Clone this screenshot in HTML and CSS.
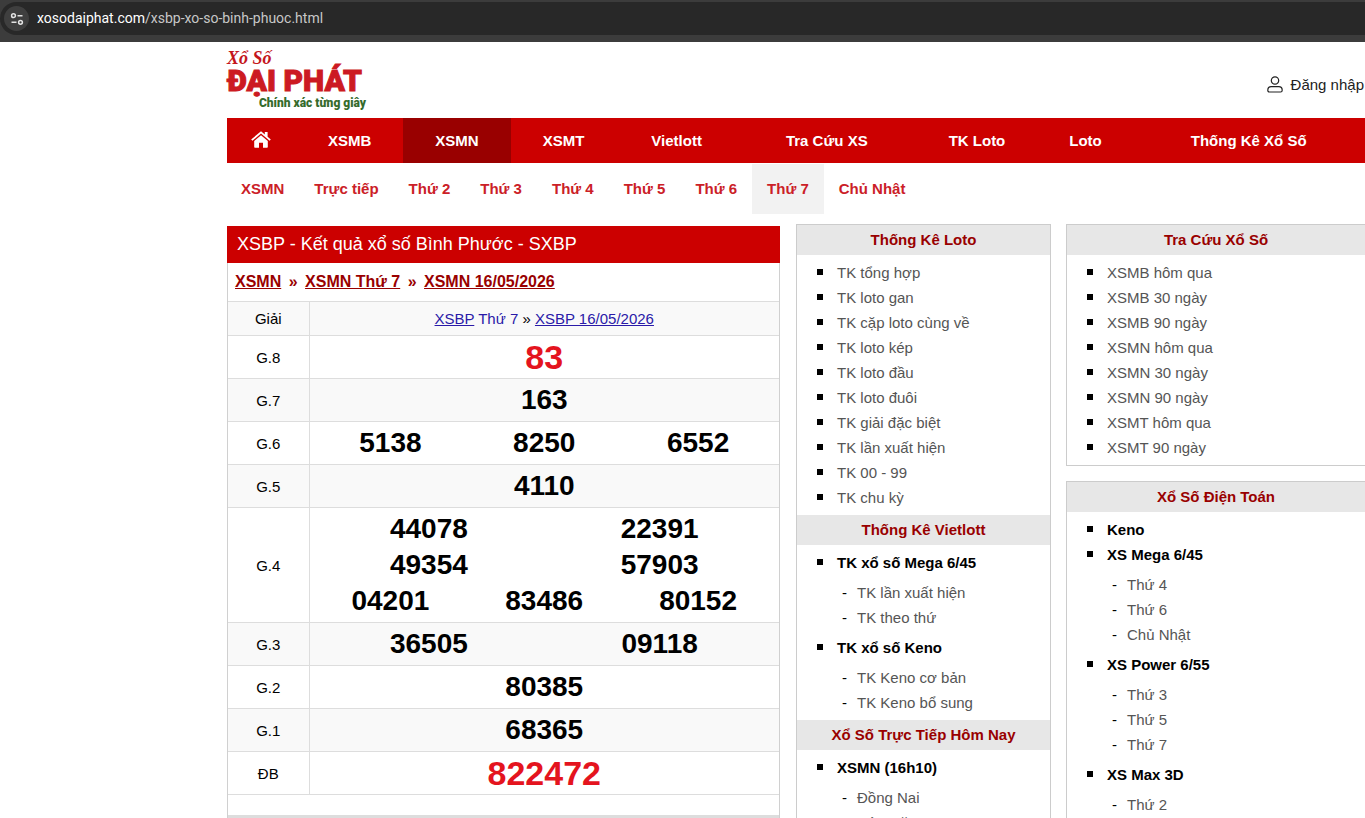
FILE: index.html
```html
<!DOCTYPE html>
<html lang="vi">
<head>
  <meta charset="UTF-8">
  <meta name="viewport" content="width=device-width, initial-scale=1.0">
  <title>XSBP - Kết quả xổ số Bình Phước - SXBP</title>
  <link rel="stylesheet" href="styles.css">
</head>
<body>
  <div class="browser-bar">
    <div class="address">
      <span class="site-info">
        <svg width="14" height="14" viewBox="0 0 14 14" fill="none" stroke="#e3e3e3" stroke-width="1.5">
          <circle cx="3.5" cy="3.7" r="1.9"/>
          <path d="M7.5 3.7h5M1.5 10.3h5"/>
          <circle cx="10.5" cy="10.3" r="1.9"/>
        </svg>
      </span>
      <span class="url"><span class="url-host">xosodaiphat.com</span>/xsbp-xo-so-binh-phuoc.html</span>
    </div>
  </div>

  <div class="container">
    <header class="header">
      <a class="logo" href="#">
        <span class="logo-top">Xổ Số</span>
        <span class="logo-name">ĐẠI PHÁT</span>
        <span class="logo-slogan">Chính xác từng giây</span>
      </a>
      <a class="login" href="#">
        <svg width="16" height="17" viewBox="0 0 16 17" fill="none" stroke="#222" stroke-width="1.2">
          <circle cx="8" cy="4.5" r="3.7"/>
          <path d="M.8 14.2c0-2.3 1.5-3.6 3.4-3.6h7.6c1.9 0 3.4 1.3 3.4 3.6 0 1.1-.6 1.8-1.6 1.8H2.4c-1 0-1.6-.7-1.6-1.8z"/>
        </svg>
        Đăng nhập
      </a>
    </header>

    <nav class="menu">
      <a class="menu-home" href="#" aria-label="Home">
        <svg width="20" height="17" viewBox="0 0 20 17" fill="#fff">
          <path d="M10 4.3 3.2 10v6c0 .5.3.8.8.8h4v-5h4v5h4c.5 0 .8-.3.8-.8v-6z"/>
          <path d="m10 .2 3.8 3.2V1h2.8v4.7l3.2 2.7-1.2 1.4L10 2.6 1.4 9.8.2 8.4z"/>
        </svg>
      </a>
      <a href="#">XSMB</a>
      <a class="active" href="#">XSMN</a>
      <a href="#">XSMT</a>
      <a class="vietlott" href="#">Vietlott</a>
      <a class="search" href="#">Tra Cứu XS</a>
      <a href="#">TK Loto</a>
      <a href="#">Loto</a>
      <a class="stats" href="#">Thống Kê Xổ Số</a>
    </nav>

    <nav class="submenu">
      <a href="#">XSMN</a>
      <a href="#">Trực tiếp</a>
      <a href="#">Thứ 2</a>
      <a href="#">Thứ 3</a>
      <a href="#">Thứ 4</a>
      <a href="#">Thứ 5</a>
      <a href="#">Thứ 6</a>
      <a class="active" href="#">Thứ 7</a>
      <a href="#">Chủ Nhật</a>
    </nav>

    <div class="content">
      <main class="result">
        <h1>XSBP - Kết quả xổ số Bình Phước - SXBP</h1>
        <div class="breadcrumb">
          <a href="#">XSMN</a> <span>»</span> <a href="#">XSMN Thứ 7</a> <span>»</span> <a href="#">XSMN 16/05/2026</a>
        </div>
        <table class="prizes">
          <tbody>
            <tr>
              <th>Giải</th>
              <td><a href="#">XSBP</a> <a class="day" href="#">Thứ 7</a> » <a href="#">XSBP 16/05/2026</a></td>
            </tr>
            <tr>
              <th>G.8</th>
              <td><div class="row special"><span>83</span></div></td>
            </tr>
            <tr>
              <th>G.7</th>
              <td><div class="row"><span>163</span></div></td>
            </tr>
            <tr>
              <th>G.6</th>
              <td><div class="row"><span>5138</span><span>8250</span><span>6552</span></div></td>
            </tr>
            <tr>
              <th>G.5</th>
              <td><div class="row"><span>4110</span></div></td>
            </tr>
            <tr>
              <th>G.4</th>
              <td>
                <div class="row"><span>44078</span><span>22391</span></div>
                <div class="row"><span>49354</span><span>57903</span></div>
                <div class="row"><span>04201</span><span>83486</span><span>80152</span></div>
              </td>
            </tr>
            <tr>
              <th>G.3</th>
              <td><div class="row"><span>36505</span><span>09118</span></div></td>
            </tr>
            <tr>
              <th>G.2</th>
              <td><div class="row"><span>80385</span></div></td>
            </tr>
            <tr>
              <th>G.1</th>
              <td><div class="row"><span>68365</span></div></td>
            </tr>
            <tr>
              <th>ĐB</th>
              <td><div class="row special"><span>822472</span></div></td>
            </tr>
          </tbody>
        </table>
        <div class="result-footer"></div>
      </main>

      <aside class="col-middle">
        <section class="box">
          <h2>Thống Kê Loto</h2>
          <ul>
            <li><a href="#">TK tổng hợp</a></li>
            <li><a href="#">TK loto gan</a></li>
            <li><a href="#">TK cặp loto cùng về</a></li>
            <li><a href="#">TK loto kép</a></li>
            <li><a href="#">TK loto đầu</a></li>
            <li><a href="#">TK loto đuôi</a></li>
            <li><a href="#">TK giải đặc biệt</a></li>
            <li><a href="#">TK lần xuất hiện</a></li>
            <li><a href="#">TK 00 - 99</a></li>
            <li><a href="#">TK chu kỳ</a></li>
          </ul>
          <h2>Thống Kê Vietlott</h2>
          <ul>
            <li><a class="group" href="#">TK xổ số Mega 6/45</a>
              <ul>
                <li><a href="#">TK lần xuất hiện</a></li>
                <li><a href="#">TK theo thứ</a></li>
              </ul>
            </li>
            <li><a class="group" href="#">TK xổ số Keno</a>
              <ul>
                <li><a href="#">TK Keno cơ bản</a></li>
                <li><a href="#">TK Keno bổ sung</a></li>
              </ul>
            </li>
          </ul>
          <h2>Xổ Số Trực Tiếp Hôm Nay</h2>
          <ul>
            <li><a class="group" href="#">XSMN (16h10)</a>
              <ul>
                <li><a href="#">Đồng Nai</a></li>
                <li><a href="#">Sóc Trăng</a></li>
              </ul>
            </li>
          </ul>
        </section>
      </aside>

      <aside class="col-right">
        <section class="box">
          <h2>Tra Cứu Xổ Số</h2>
          <ul>
            <li><a href="#">XSMB hôm qua</a></li>
            <li><a href="#">XSMB 30 ngày</a></li>
            <li><a href="#">XSMB 90 ngày</a></li>
            <li><a href="#">XSMN hôm qua</a></li>
            <li><a href="#">XSMN 30 ngày</a></li>
            <li><a href="#">XSMN 90 ngày</a></li>
            <li><a href="#">XSMT hôm qua</a></li>
            <li><a href="#">XSMT 90 ngày</a></li>
          </ul>
        </section>
        <section class="box">
          <h2>Xổ Số Điện Toán</h2>
          <ul>
            <li><a class="group" href="#">Keno</a></li>
            <li><a class="group" href="#">XS Mega 6/45</a>
              <ul>
                <li><a href="#">Thứ 4</a></li>
                <li><a href="#">Thứ 6</a></li>
                <li><a href="#">Chủ Nhật</a></li>
              </ul>
            </li>
            <li><a class="group" href="#">XS Power 6/55</a>
              <ul>
                <li><a href="#">Thứ 3</a></li>
                <li><a href="#">Thứ 5</a></li>
                <li><a href="#">Thứ 7</a></li>
              </ul>
            </li>
            <li><a class="group" href="#">XS Max 3D</a>
              <ul>
                <li><a href="#">Thứ 2</a></li>
              </ul>
            </li>
          </ul>
        </section>
      </aside>
    </div>
  </div>
</body>
</html>
```

FILE: styles.css
```css
* {
  box-sizing: border-box;
}

html {
  overflow: hidden;
}

body {
  margin: 0;
  font-family: "Liberation Sans", Arial, sans-serif;
  font-size: 15px;
  line-height: 25px;
  color: #000;
  background: #fff;
}

a {
  color: inherit;
  text-decoration: none;
}

/* browser bar */
.browser-bar {
  height: 42px;
  padding: 2px 0 7px;
  background: #3c3c3c;
}

.address {
  display: flex;
  align-items: center;
  gap: 8px;
  height: 33px;
  padding-left: 4px;
  border-radius: 17px 0 0 17px;
  background: #282828;
}

.site-info {
  display: flex;
  align-items: center;
  justify-content: center;
  width: 25px;
  height: 25px;
  border-radius: 50%;
  background: #3f3f3f;
}

.url {
  font-family: Roboto, "Open Sans", sans-serif;
  font-size: 14px;
  color: #c7c7c7;
}

.url-host {
  color: #fff;
}

/* page */
.container {
  margin: 0 -1px 0 227px;
}

.header {
  display: flex;
  align-items: center;
  justify-content: space-between;
  height: 76px;
}

.logo {
  display: flex;
  flex-direction: column;
  width: 139px;
}

.logo-top {
  font-family: "Liberation Serif", serif;
  font-size: 18px;
  font-style: italic;
  font-weight: bold;
  line-height: 16px;
  color: #c4161c;
}

.logo-name {
  font-family: Roboto, sans-serif;
  font-size: 30px;
  font-weight: 900;
  line-height: 30px;
  white-space: nowrap;
  color: #cc1a22;
  -webkit-text-stroke: 1px #cc1a22;
}

.logo-slogan {
  font-family: Roboto, sans-serif;
  font-size: 12px;
  font-weight: 900;
  line-height: 14px;
  text-align: right;
  white-space: nowrap;
  color: #356b2c;
}

.login {
  display: flex;
  align-items: center;
  gap: 8px;
  padding: 8px 2px 0 0;
  color: #222;
}

.menu {
  display: flex;
  background: #c00;
}

.menu a {
  padding: 0 32px;
  line-height: 45px;
  font-weight: bold;
  color: #fff;
  white-space: nowrap;
}

.menu .menu-home {
  display: flex;
  align-items: center;
  padding: 0 25px 3px 24px;
}

.menu .vietlott {
  padding: 0 35px;
}

.menu .search {
  padding: 0 49px;
}

.menu .stats {
  padding: 0 57px;
}

.menu .active {
  background: #900;
}

.submenu {
  display: flex;
  padding-top: 1px;
}

.submenu a {
  padding: 0 15px;
  line-height: 50px;
  font-weight: bold;
  color: #cb2027;
}

.submenu a:first-child {
  padding-left: 14px;
}

.submenu .active {
  background: #f2f2f2;
}

.content {
  display: flex;
  align-items: flex-start;
  gap: 15px;
  padding-top: 10px;
}

/* results */
.result {
  flex: 1;
  margin: 2px 1px 0 0;
  border: 1px solid #d0d0d0;
  border-top: 0;
}

.result h1 {
  margin: 0 -1px;
  padding: 0 10px;
  font-size: 18px;
  font-weight: normal;
  line-height: 37px;
  color: #fff;
  background: #c00;
}

.breadcrumb {
  padding: 0 7px;
  font-size: 16px;
  font-weight: bold;
  line-height: 38px;
  color: #900;
}

.breadcrumb a {
  text-decoration: underline;
}

.breadcrumb span {
  margin: 0 3px;
}

.prizes {
  width: 100%;
  border-collapse: collapse;
  table-layout: fixed;
  text-align: center;
}

.prizes th {
  width: 81px;
  padding: 0;
  border: 1px solid #ddd;
  border-left: 0;
  font-weight: normal;
}

.prizes td {
  padding: 3px 4px;
  border: 1px solid #ddd;
  border-right: 0;
  line-height: 27px;
}

.prizes tr:nth-child(odd) {
  background: #f9f9f9;
}

.prizes td a {
  color: #2a1aa8;
  text-decoration: underline;
}

.prizes td .day {
  text-decoration: none;
}

.row {
  display: flex;
  font-size: 28px;
  font-weight: bold;
  line-height: 36px;
}

.row span {
  flex: 1;
}

.special {
  font-size: 34px;
  color: #e4141e;
}

.result-footer {
  height: 40px;
  border-bottom: 20px solid #ddd;
}

/* side columns */
.col-middle {
  width: 255px;
}

.col-right {
  width: 300px;
}

.box {
  margin-bottom: 15px;
  border: 1px solid #ccc;
}

.box h2 {
  margin: 0;
  font-size: 15px;
  line-height: 30px;
  text-align: center;
  color: #900;
  background: #e7e7e7;
}

.box ul {
  margin: 0;
  padding: 5px 0 5px 40px;
  list-style: none;
}

.box li::before {
  content: "";
  display: inline-block;
  width: 6px;
  height: 6px;
  margin: 0 14px 0 -20px;
  vertical-align: 3px;
  background: #000;
}

.box li a {
  color: #555;
}

.box li .group {
  font-weight: bold;
  color: #000;
}

.box li ul {
  padding-left: 20px;
}

.box li:last-child > ul {
  padding-bottom: 0;
}

.box li li::before {
  content: "-";
  width: 15px;
  height: auto;
  margin: 0 0 0 -15px;
  vertical-align: baseline;
  background: none;
}
```
